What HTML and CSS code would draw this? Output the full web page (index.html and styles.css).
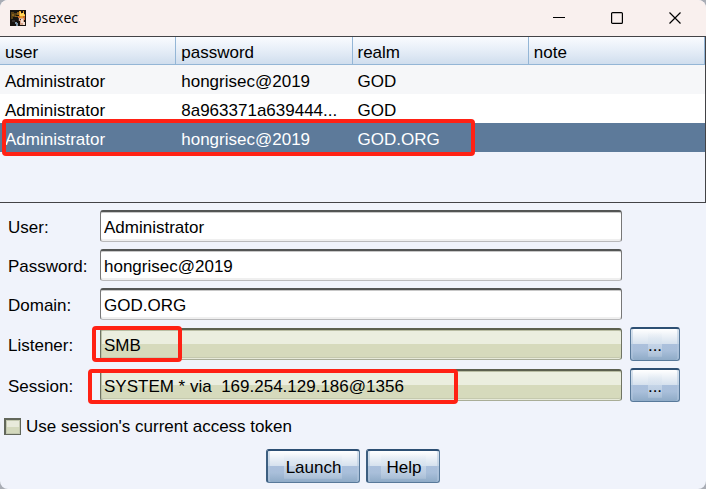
FILE: index.html
```html
<!DOCTYPE html>
<html lang="en">
<head>
<meta charset="utf-8">
<title>psexec</title>
<link rel="stylesheet" href="styles.css">
</head>
<body>
<main class="window">
  <header class="titlebar">
    <svg class="app-icon" viewBox="0 0 16 16" aria-hidden="true" shape-rendering="crispEdges">
      <rect width="16" height="16" fill="#17130f"/>
      <path fill="#594015" d="M1 2h3v1h4v2H6v2H3v2H1z"/>
      <path fill="#8a601c" d="M2 4h2v2H2zM7 2h2v3H7zM5 6h3v1H5z"/>
      <path fill="#e69a25" d="M9 1h2v2h2V1h1v3h1v4H9z"/>
      <path fill="#ffd85c" d="M10 2h1v2h1V3h2v2h1v1H10z"/>
      <path fill="#c96c2c" d="M8 6h2v2H8zM13 6h2v4h-2z"/>
      <path fill="#d8a58a" d="M9 8h5v5h-1v2h-3v-4H9z"/>
      <path fill="#f4ddd0" d="M11 9h2v4h-2zM13 12h2v3h-2z"/>
      <path fill="#7c94a6" d="M5 12h2v1h1v3H6v-2H5z"/>
      <path fill="#35302e" d="M8 8h1v3H8zM10 9h1v1h-1zM2 10h3v2H2z"/>
    </svg>
    <h1 class="title">psexec</h1>
    <div class="controls">
      <button class="control" aria-label="Minimize"><svg viewBox="0 0 12 12"><path d="M0 5.5h12"/></svg></button>
      <button class="control" aria-label="Maximize"><svg viewBox="0 0 12 12"><rect x=".6" y=".6" width="10.8" height="10.8" rx="1"/></svg></button>
      <button class="control" aria-label="Close"><svg viewBox="0 0 12 12"><path d="M.5.5l11 11M11.5.5l-11 11"/></svg></button>
    </div>
  </header>
  <section class="table-pane">
    <table class="credentials">
      <thead><tr><th>user</th><th>password</th><th>realm</th><th>note</th></tr></thead>
      <tbody>
        <tr><td>Administrator</td><td>hongrisec@2019</td><td>GOD</td><td></td></tr>
        <tr><td>Administrator</td><td>8a963371a639444...</td><td>GOD</td><td></td></tr>
        <tr class="selected"><td>Administrator</td><td>hongrisec@2019</td><td>GOD.ORG</td><td></td></tr>
      </tbody>
    </table>
    <span class="mark mark-row"></span>
  </section>
  <form class="form">
    <div class="fields">
      <label for="user">User:</label>
      <div class="field"><input id="user" type="text" value="Administrator"></div>
      <label for="password">Password:</label>
      <div class="field"><input id="password" type="text" value="hongrisec@2019"></div>
      <label for="domain">Domain:</label>
      <div class="field"><input id="domain" type="text" value="GOD.ORG"></div>
      <label for="listener">Listener:</label>
      <div class="field"><input id="listener" class="locked" type="text" value="SMB" readonly><span class="mark mark-listener"></span></div>
      <button class="button" type="button" aria-label="Choose listener">...</button>
      <label for="session">Session:</label>
      <div class="field"><input id="session" class="locked" type="text" value="SYSTEM * via  169.254.129.186@1356" readonly><span class="mark mark-session"></span></div>
      <button class="button" type="button" aria-label="Choose session">...</button>
    </div>
    <label class="token"><input class="check" type="checkbox">Use session's current access token</label>
    <div class="actions">
      <button class="button action" type="button">Launch</button>
      <button class="button action" type="button">Help</button>
    </div>
  </form>
</main>
</body>
</html>
```
FILE: styles.css
```css
* { box-sizing: border-box; }

body {
  margin: 0;
  background: #a9adb5;
  color: #000;
  font: 17px/20px "Liberation Sans", Arial, sans-serif;
}

button, input { font: inherit; color: inherit; }

.window {
  min-height: 100vh;
  overflow: hidden;
  border-radius: 8px;
  background: #f0f3fb;
}

.titlebar {
  display: flex;
  align-items: center;
  height: 36px;
  padding: 0 2px 0 10px;
  background: #f9f0ee;
}

.app-icon { width: 16px; height: 16px; }

.title {
  margin: 0 0 0 7px;
  font: 14px/20px "Open Sans", "Noto Sans", sans-serif;
}

.controls { display: flex; margin-left: auto; }

.control {
  display: grid;
  place-items: center;
  width: 58px;
  height: 34px;
  padding: 0;
  border: 0;
  background: none;
}

.control svg {
  width: 12px;
  height: 12px;
  fill: none;
  stroke: #000;
  stroke-width: 1.2;
}

.table-pane {
  position: relative;
  height: 167px;
  border: solid #434346;
  border-width: 1px 1px 1px 0;
}

.credentials {
  width: 100%;
  table-layout: fixed;
  border-collapse: separate;
  border-spacing: 0;
}

.credentials th,
.credentials td {
  height: 29px;
  padding: 4px 0 0 5px;
  text-align: left;
  font-weight: 400;
  white-space: nowrap;
}

.credentials th {
  height: 28px;
  border: solid #94b6d6;
  border-width: 0 1px 1px 0;
  background: linear-gradient(#f9fbfe, #e8eff8 45%, #d0deee);
}

.credentials tbody tr { background: #fff; }
.credentials tbody tr:first-child { background: #f6f7f9; }
.credentials tbody .selected { background: #5d7a9a; color: #fff; }

.mark {
  position: absolute;
  border: 4px solid #ff2114;
  border-radius: 4px;
  pointer-events: none;
}

.mark-row { left: 2px; top: 82px; width: 473px; height: 37px; }
.mark-listener { left: -8px; top: -2px; width: 90px; height: 36px; }
.mark-session { left: -12px; top: 0; width: 370px; height: 35px; }

.form { padding: 7px 0 6px; }

.fields {
  display: grid;
  grid-template-columns: 84px 1fr 50px;
  gap: 7px 8px;
  align-items: center;
  padding: 0 26px 0 8px;
}

.fields label { grid-column: 1; padding-top: 4px; }
.field { position: relative; }

.field input {
  display: block;
  width: 100%;
  height: 32px;
  padding: 2px 3px 0;
  border: 1px solid #777;
  border-top: 2px solid #535554;
  border-bottom-color: #b9b9bb;
  border-radius: 3px;
  outline: 0;
  background: #fff;
  box-shadow: inset 0 1px #c8c8c8, inset 0 -2px #efefef;
}

.field .locked {
  border-color: #5c604f #707463 #a9ad97;
  background: linear-gradient(#ebeedf 48%, #d6dabc 48%);
  box-shadow: inset 0 1px #b9bda4, inset 1px 0 #bfc3aa, inset 0 -1px #e7eada, inset 0 -2px #c5c9ae;
}

.button {
  height: 34px;
  padding: 2px 0 0;
  border: 1px solid #58799a;
  border-top: 2px solid #2d4f73;
  border-radius: 3px;
  background:
    linear-gradient(#fff0, #d5e1ee99 50%, #c0d0e166) center / 30% 80% no-repeat,
    linear-gradient(#fff, #d4e0ed 50%, #abc0dc 50%, #a9bfda 70%, #8fabc7);
  box-shadow: inset 2px 0 #b3c8dd80, inset -2px 0 #b3c8dd80;
}

.token {
  display: flex;
  align-items: center;
  gap: 5px;
  margin: 13px 0 0 4px;
  height: 24px;
}

.check {
  appearance: none;
  width: 17px;
  height: 17px;
  margin: 0 0 2px;
  border: 1px solid #62675b;
  border-width: 2px 1px 1px 2px;
  background: linear-gradient(#e8eadb 50%, #d4d9bd 50%);
  box-shadow: inset 0 0 0 1px #c3c8b0;
}

.actions {
  display: flex;
  justify-content: center;
  gap: 6px;
  margin-top: 10px;
}

.action {
  padding: 2px 18px 0;
  background:
    linear-gradient(#fff0, #d5e1ee99 50%, #c0d0e166) center / 64% 80% no-repeat,
    linear-gradient(#fff, #d4e0ed 50%, #abc0dc 50%, #a9bfda 70%, #8fabc7);
  border-left: 2px solid #3c5e80;
}
```
